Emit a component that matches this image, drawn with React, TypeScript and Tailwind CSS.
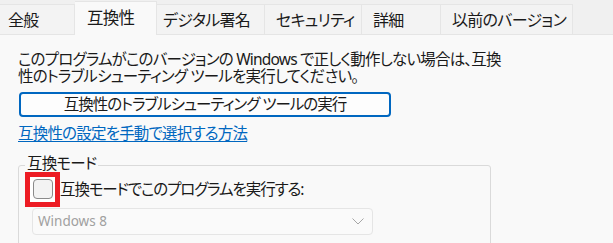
import React from "react";

const font = "font-['Noto_Sans','Noto_Sans_CJK_JP',sans-serif] [font-feature-settings:'palt']";

function Tab({ label, w, pl, selected }: { label: string; w: number; pl: number; selected?: boolean }) {
  if (selected) {
    return (
      <div
        className="relative z-10 h-[34px] -mb-px flex items-center whitespace-nowrap bg-[#f9f9f9] border-t border-r border-[#e5e5e5] text-[16.5px] tracking-[-0.7px] text-[#1a1a1a] shrink-0"
        style={{ width: w, paddingLeft: pl }}
      >
        {label}
      </div>
    );
  }
  return (
    <div
      className="h-[30px] flex items-center whitespace-nowrap bg-[#f3f3f3] border-t border-r border-[#e5e5e5] text-[16px] tracking-[-0.7px] text-[#1a1a1a] shrink-0"
      style={{ width: w, paddingLeft: pl }}
    >
      {label}
    </div>
  );
}

export default function App() {
  return (
    <div className={`w-[613px] h-[243px] overflow-hidden bg-[#f9f9f9] ${font}`}>
      <div className="h-[35px] flex items-end bg-[#f0f0f0] border-b border-[#e5e5e5]">
        <Tab label="全般" w={75} pl={8} />
        <Tab label="互換性" w={82} pl={12} selected />
        <Tab label="デジタル署名" w={108} pl={6} />
        <Tab label="セキュリティ" w={97} pl={11} />
        <Tab label="詳細" w={79} pl={11} />
        <Tab label="以前のバージョン" w={132} pl={11} />
      </div>
      <div className="pl-[18px] pt-[16px] text-[#1a1a1a] text-[15.5px] tracking-[-0.8px]">
        <p className="leading-[17px] whitespace-nowrap">
          このプログラムがこのバージョンの Windows で正しく動作しない場合は、互換
          <br />
          性のトラブルシューティング ツールを実行してください。
        </p>
        <button className="mt-[7px] ml-px w-[372px] h-[25px] flex items-center justify-center rounded-[4px] border-2 border-[#0067c0] bg-[#fdfdfd] leading-none text-[#1a1a1a] tracking-[-1px]">
          互換性のトラブルシューティング ツールの実行
        </button>
        <a className="block mt-[8px] w-fit leading-[17px] text-[#0067c0] underline underline-offset-2">
          互換性の設定を手動で選択する方法
        </a>
        <div className="relative mt-[23px] w-[473px] h-[120px] border border-[#dadada] rounded-[3px]">
          <span className="absolute -top-[11px] left-[6px] px-[2px] bg-[#f9f9f9] leading-[17px]">
            互換モード
          </span>
          <div className="flex items-center pl-[6px] pt-[6px]">
            <div className="w-[35px] h-[35px] border-[5px] border-[#ed1c24] bg-white shrink-0">
              <div className="ml-[3px] mt-[2px] w-[20px] h-[20px] rounded-[4px] border border-[#8a8a8a] bg-[#f3f3f3]" />
            </div>
            <span className="leading-[17px] whitespace-nowrap tracking-[-1.1px]">互換モードでこのプログラムを実行する:</span>
          </div>
          <div className="ml-[13px] mt-px w-[341px] h-[27px] flex items-center justify-between pl-[5px] pr-[8px] rounded-[4px] border border-[#e5e5e5] bg-[#fafafa]">
            <span className="text-[13.5px] tracking-normal text-[#a0a0a0] font-['Noto_Sans',sans-serif]">Windows 8</span>
            <svg width="12" height="7" viewBox="0 0 12 7" fill="none">
              <path d="M0.5 0.5 L6 6 L11.5 0.5" stroke="#a6a6a6" strokeWidth="1" />
            </svg>
          </div>
        </div>
      </div>
    </div>
  );
}
